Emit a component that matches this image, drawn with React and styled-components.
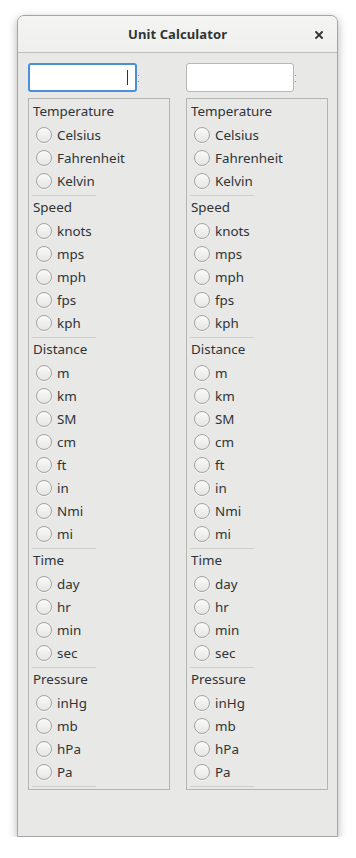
import React from 'react';
import styled, { createGlobalStyle } from 'styled-components';

const GlobalStyle = createGlobalStyle`
  html, body {
    margin: 0;
    padding: 0;
    background: #ffffff;
  }
  body {
    font-family: "Noto Sans", "Open Sans", sans-serif;
    color: #2e3436;
  }
`;

const Window = styled.div`
  box-sizing: border-box;
  margin: 15px 0 0 17px;
  width: 321px;
  height: 822px;
  border: 1px solid #a4a4a2;
  border-radius: 7px 7px 0 0;
  background: #e8e8e7;
  box-shadow: 0 3px 10px rgba(0, 0, 0, 0.3);
  display: flex;
  flex-direction: column;
  overflow: hidden;
`;

const TitleBar = styled.div`
  height: 36px;
  flex: none;
  border-bottom: 1px solid #bdbdbb;
  background: linear-gradient(#f4f4f3, #efefee);
  display: grid;
  grid-template-columns: 1fr auto 1fr;
  align-items: center;
`;

const Title = styled.div`
  grid-column: 2;
  font-size: 13px;
  font-weight: 700;
  letter-spacing: 0.1px;
  color: #2e3436;
`;

const CloseButton = styled.div`
  grid-column: 3;
  justify-self: end;
  width: 8px;
  height: 8px;
  margin-right: 14px;
  margin-top: 1px;
  display: flex;
`;

const Content = styled.div`
  padding: 10px 0 0 10px;
  display: grid;
  grid-template-columns: 142px 142px;
  column-gap: 16px;
`;

const Column = styled.div`
  display: flex;
  flex-direction: column;
`;

const EntryRow = styled.div`
  display: flex;
  align-items: center;
  height: 29px;
  margin-bottom: 6px;
`;

const Entry = styled.div`
  box-sizing: border-box;
  width: ${(p) => (p.$focused ? 109 : 108)}px;
  height: 29px;
  background: #ffffff;
  border: ${(p) => (p.$focused ? '2px solid #4a90d9' : '1px solid #b6b6b3')};
  border-radius: 3px;
  position: relative;
`;

const Caret = styled.span`
  position: absolute;
  right: 7px;
  top: 5px;
  width: 1px;
  height: 15px;
  background: #2e3436;
`;

const Grip = styled.div`
  display: flex;
  flex-direction: column;
  gap: 5px;
  margin-left: 1px;
  margin-top: 2px;
  span {
    width: 1px;
    height: 1px;
    background: #8e8e8c;
  }
`;

const Frame = styled.div`
  box-sizing: border-box;
  width: 142px;
  border: 1px solid #b4b4b1;
  padding: 1px 0 2px;
`;

const GroupHeader = styled.div`
  height: 23px;
  line-height: 23px;
  padding-left: 4px;
  font-size: 13.4px;
`;

const Option = styled.label`
  height: 23px;
  display: flex;
  align-items: center;
  gap: 5px;
  padding-left: 7px;
  font-size: 13.4px;
`;

const Radio = styled.input.attrs({ type: 'radio' })`
  appearance: none;
  margin: 0;
  width: 16px;
  height: 16px;
  box-sizing: border-box;
  border-radius: 50%;
  border: 1px solid #a3a3a1;
  background: linear-gradient(#fafafa, #e6e6e5);
  box-shadow: 0 1px 0 rgba(255, 255, 255, 0.6);
  flex: none;
`;

const Separator = styled.div`
  height: 1px;
  width: 64px;
  margin: 3px 0 0 3px;
  background: #cfcfcd;
`;

const groups = [
  { name: 'Temperature', units: ['Celsius', 'Fahrenheit', 'Kelvin'] },
  { name: 'Speed', units: ['knots', 'mps', 'mph', 'fps', 'kph'] },
  { name: 'Distance', units: ['m', 'km', 'SM', 'cm', 'ft', 'in', 'Nmi', 'mi'] },
  { name: 'Time', units: ['day', 'hr', 'min', 'sec'] },
  { name: 'Pressure', units: ['inHg', 'mb', 'hPa', 'Pa'] },
];

function UnitColumn({ side, focused }) {
  return (
    <Column>
      <EntryRow>
        <Entry $focused={focused}>{focused && <Caret />}</Entry>
        <Grip>
          <span />
          <span />
        </Grip>
      </EntryRow>
      <Frame>
        {groups.map((g) => (
          <div key={g.name}>
            <GroupHeader>{g.name}</GroupHeader>
            {g.units.map((u) => (
              <Option key={u}>
                <Radio name={side} />
                {u}
              </Option>
            ))}
            <Separator />
          </div>
        ))}
      </Frame>
    </Column>
  );
}

export default function App() {
  return (
    <>
      <GlobalStyle />
      <Window>
        <TitleBar>
          <Title>Unit Calculator</Title>
          <CloseButton>
            <svg width="8" height="8" viewBox="0 0 8 8">
              <path d="M1 1 L7 7 M7 1 L1 7" stroke="#2e3436" strokeWidth="1.9" strokeLinecap="square" />
            </svg>
          </CloseButton>
        </TitleBar>
        <Content>
          <UnitColumn side="from" focused />
          <UnitColumn side="to" />
        </Content>
      </Window>
    </>
  );
}
